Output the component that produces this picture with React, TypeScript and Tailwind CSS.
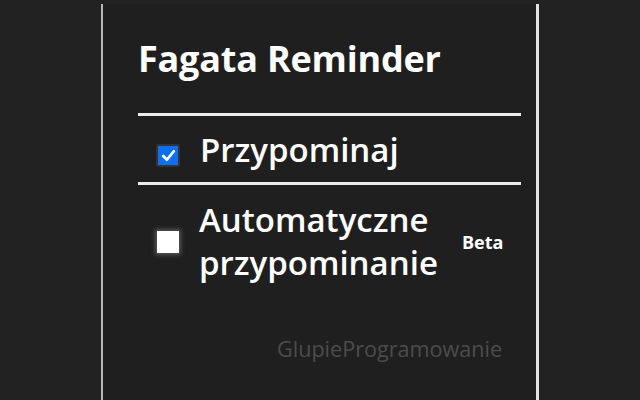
import React from "react";

export default function App() {
  return (
    <div
      className="w-[640px] h-[400px] bg-[#222222] flex overflow-hidden"
      style={{ fontFamily: '"Open Sans", "Noto Sans", sans-serif' }}
    >
      <div className="ml-[101px] mt-[4px] w-[438px] h-[396px] bg-[#1f1f1f] border-l-[2px] border-l-[#b8b8b8] border-r-[3px] border-r-[#e2e2e2] flex flex-col pl-[35px] pr-[15px]">
        <h1 className="mt-[35px] text-[36px] leading-[40px] font-bold text-white tracking-[-0.2px]">
          Fagata Reminder
        </h1>
        <div className="mt-[34px] h-[3px] bg-[#ececec]" />
        <div className="flex items-start h-[66px] pl-[18px]">
          <div className="mt-[28px] w-[24px] h-[23px] rounded-[2px] border-[2px] border-[#333333] bg-[#0f6ff2] flex items-center justify-center shrink-0">
            <svg viewBox="0 0 16 16" className="w-[17px] h-[17px]" fill="none" stroke="white" strokeWidth="2.6" strokeLinecap="round" strokeLinejoin="round">
              <path d="M3 8.5 L6.5 12 L13 4" />
            </svg>
          </div>
          <span className="ml-[20px] mt-[16px] text-[33px] leading-[36px] font-semibold text-white">Przypominaj</span>
        </div>
        <div className="h-[3px] bg-[#ececec]" />
        <div className="flex items-start pl-[19px]">
          <div className="mt-[46px] w-[22px] h-[22px] bg-white shadow-[0_0_4px_2px_rgba(120,120,120,0.6)] shrink-0" />
          <span className="ml-[20px] mt-[13px] text-[33px] leading-[43px] font-semibold text-white w-[243px]">
            Automatyczne przypominanie
          </span>
          <span className="ml-[20px] mt-[45px] text-[18px] leading-[24px] font-bold text-white">Beta</span>
        </div>
        <div className="mt-[50px] pl-[139px] text-[21.6px] leading-[30px] text-[#4c4c4c]">
          GlupieProgramowanie
        </div>
      </div>
    </div>
  );
}
